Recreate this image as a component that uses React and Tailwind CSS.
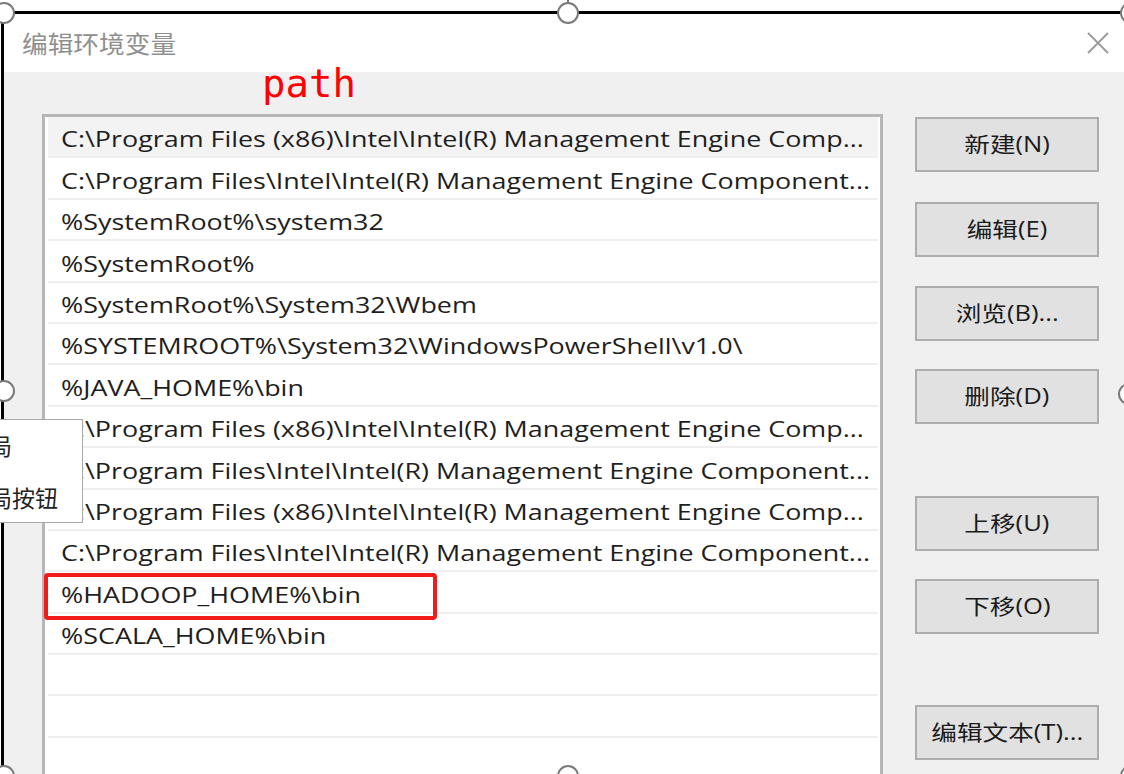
const rows = [
  'C:\\Program Files (x86)\\Intel\\Intel(R) Management Engine Comp...',
  'C:\\Program Files\\Intel\\Intel(R) Management Engine Component...',
  '%SystemRoot%\\system32',
  '%SystemRoot%',
  '%SystemRoot%\\System32\\Wbem',
  '%SYSTEMROOT%\\System32\\WindowsPowerShell\\v1.0\\',
  '%JAVA_HOME%\\bin',
  'C:\\Program Files (x86)\\Intel\\Intel(R) Management Engine Comp...',
  'C:\\Program Files\\Intel\\Intel(R) Management Engine Component...',
  'C:\\Program Files (x86)\\Intel\\Intel(R) Management Engine Comp...',
  'C:\\Program Files\\Intel\\Intel(R) Management Engine Component...',
  '%HADOOP_HOME%\\bin',
  '%SCALA_HOME%\\bin',
  '',
  '',
  '',
];

const buttons = [
  { label: '新建(N)', cls: 'mt-[3px]' },
  { label: '编辑(E)', cls: 'mt-[30px]' },
  { label: '浏览(B)...', cls: 'mt-[29px]' },
  { label: '删除(D)', cls: 'mt-[28px]' },
  { label: '上移(U)', cls: 'mt-[72px]' },
  { label: '下移(O)', cls: 'mt-[28px]' },
  { label: '编辑文本(T)...', cls: 'mt-[71px]' },
];

// selection handles around the pasted picture
const handles = [
  'left-[-7px] top-[2px]',
  'left-[557px] top-[2px]',
  'left-[1120px] top-[2px]',
  'left-[-7px] top-[380px]',
  'left-[1118px] top-[383px]',
  'left-[-7px] top-[765px]',
  'left-[557px] top-[765px]',
  'left-[1120px] top-[765px]',
];

const font = { fontFamily: '"Open Sans", "Noto Sans CJK SC", sans-serif' };
const cjk = { fontFamily: '"Noto Sans CJK SC", sans-serif' };

export default function App() {
  return (
    <div className="relative w-[1124px] h-[774px] overflow-hidden bg-white" style={font}>
      <div className="pl-[4px] pt-[14px] flex flex-col h-[774px]">
        <div className="shrink-0 h-[58px] bg-white flex items-center justify-between pl-[18px] pr-[15px]">
          <span className="inline-block origin-left scale-x-[1.07] text-[24px] text-[#8f8f8f] leading-none" style={cjk}>编辑环境变量</span>
          <svg width="22" height="22" viewBox="0 0 22 22">
            <path d="M1 1 L21 21 M21 1 L1 21" stroke="#9c9c9c" strokeWidth="2" fill="none" />
          </svg>
        </div>
        <div className="flex-1 min-h-0 overflow-hidden bg-[#f0f0f0] flex pl-[38px] pt-[42px]">
          <div className="shrink-0 w-[841px] border-[3px] border-[#b6b6b6] bg-white self-start">
            {rows.map((r, i) => (
              <div key={i} className="h-[41.4px] pl-[3px] pr-[2px]">
                <div className={`h-full flex items-center pl-[13px] pt-[7px] border-b-2 border-[#efefef] ${i === 0 ? 'bg-[#f3f3f3]' : ''}`}>
                  <span className="inline-block origin-left scale-x-[1.28] text-[21px] text-[#1e1e1e] whitespace-nowrap">{r}</span>
                </div>
              </div>
            ))}
          </div>
          <div className="shrink-0 ml-[32px] flex flex-col">
            {buttons.map((b) => (
              <div key={b.label} className={`${b.cls} shrink-0 w-[184px] h-[55px] border-2 border-[#adadad] bg-[#e1e1e1] flex items-center justify-center`}>
                <span className="inline-block scale-x-[1.22] text-[21px] text-[#1b1b1b]">{b.label}</span>
              </div>
            ))}
          </div>
        </div>
      </div>

      {/* annotations */}
      <div className="absolute left-[262px] top-[64px] text-[39px] text-[#ff0000] leading-none" style={{ fontFamily: '"DejaVu Sans Mono", monospace' }}>path</div>
      <div className="absolute left-[44px] top-[573px] w-[393px] h-[47px] border-[4px] border-[#f21b1b] rounded-[4px]" />

      {/* selection frame */}
      <div className="absolute left-[1px] top-[11px] w-[1133px] h-[767px] border-[3px] border-black" />
      <div className="absolute left-[567px] top-0 w-[2px] h-[3px] bg-[#777]" />
      {handles.map((h) => (
        <div key={h} className={`absolute ${h} w-[22px] h-[22px] rounded-full bg-white border-2 border-[#7a7a7a]`} />
      ))}

      {/* context menu peeking in from the left */}
      <div className="absolute left-[-20px] top-[419px] w-[103px] h-[104px] bg-white border border-[#a8a8a8] flex flex-col gap-[29px] pl-[8px] pt-[14px] text-[23px] text-[#222] leading-none" style={cjk}>
        <span>局</span>
        <span>局按钮</span>
      </div>
    </div>
  );
}
